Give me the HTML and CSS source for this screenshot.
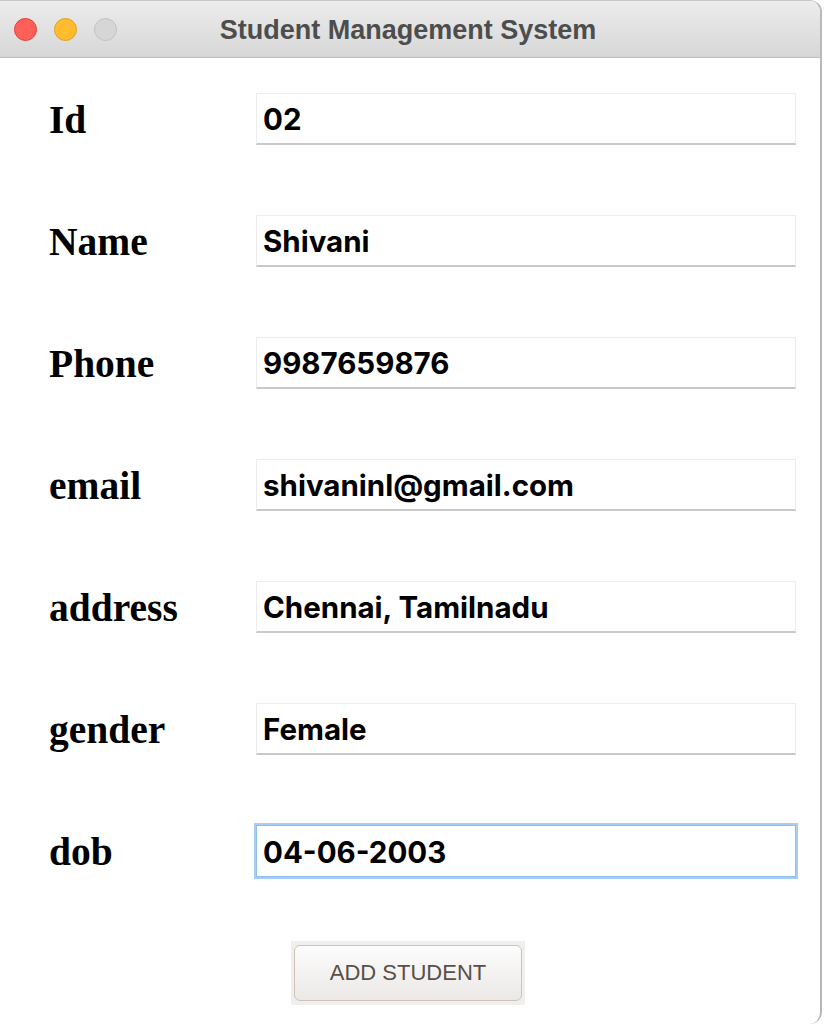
FILE: index.html
```html
<!DOCTYPE html>
<html>
<head>
<meta charset="utf-8">
<link rel="stylesheet" href="styles.css">
</head>
<body>
<div class="window">
  <div class="titlebar">
    <div class="lights">
      <span class="light red"></span>
      <span class="light yellow"></span>
      <span class="light gray"></span>
    </div>
    <div class="title">Student Management System</div>
  </div>
  <div class="content">
    <div class="row"><div class="label">Id</div><div class="field">02</div></div>
    <div class="row"><div class="label">Name</div><div class="field">Shivani</div></div>
    <div class="row"><div class="label">Phone</div><div class="field">9987659876</div></div>
    <div class="row"><div class="label">email</div><div class="field">shivaninl@gmail.com</div></div>
    <div class="row"><div class="label">address</div><div class="field">Chennai, Tamilnadu</div></div>
    <div class="row"><div class="label">gender</div><div class="field">Female</div></div>
    <div class="row"><div class="label">dob</div><div class="field focused">04-06-2003</div></div>
    <div class="actions">
      <div class="btn-wrap"><button class="btn">ADD STUDENT</button></div>
    </div>
  </div>
</div>
</body>
</html>
```
FILE: styles.css
```css
html, body {
  margin: 0;
  padding: 0;
  background: #ffffff;
}
.window {
  width: 822px;
  height: 1024px;
  box-sizing: border-box;
  border-right: 2px solid #b9b9b9;
  border-top: 1px solid #c8c8c8;
  border-radius: 0 12px 12px 0;
  overflow: hidden;
  background: #ffffff;
}
.titlebar {
  position: relative;
  height: 56px;
  background: linear-gradient(#ececec, #d7d7d7);
  border-bottom: 1px solid #bdbdbd;
  display: flex;
  align-items: center;
  justify-content: center;
}
.lights {
  position: absolute;
  left: 14px;
  top: 17px;
  display: flex;
  gap: 17px;
}
.light {
  width: 23px;
  height: 23px;
  border-radius: 50%;
  box-sizing: border-box;
}
.red { background: #fe5f57; border: 1px solid #e0443e; }
.yellow { background: #febc2e; border: 1px solid #dea123; }
.gray { background: #d6d6d6; border: 1px solid #c2c2c2; }
.title {
  font-family: "Liberation Sans", Arial, sans-serif;
  font-weight: bold;
  font-size: 27px;
  color: #4d4d4d;
  margin-left: -4px;
  margin-top: 2px;
}
.content {
  padding: 35px 0 0 0;
  display: flex;
  flex-direction: column;
  gap: 70px;
}
.row {
  display: flex;
  align-items: center;
  height: 52px;
}
.label {
  width: 207px;
  padding-left: 49px;
  box-sizing: content-box;
  font-family: "Liberation Serif", "Times New Roman", serif;
  font-weight: bold;
  font-size: 39.5px;
  color: #000;
  margin-top: 2px;
}
.field {
  width: 540px;
  height: 52px;
  box-sizing: border-box;
  border: 1px solid #ececec;
  border-bottom: 2px solid #c9c9c9;
  background: #fff;
  padding: 0 6px;
  display: flex;
  align-items: center;
  font-family: Inter, "Liberation Sans", Arial, sans-serif;
  font-weight: bold;
  font-size: 29.5px;
  color: #000;
}
.field.focused {
  border: 1px solid #8fbdf0;
  box-shadow: 0 0 0 2px #a7cdf7;
  padding-top: 2px;
}
.actions {
  display: flex;
  justify-content: center;
  margin-top: -6px;
  padding-right: 4px;
}
.btn-wrap {
  background: #f1efed;
  padding: 4px 3px 4px 3px;
}
.btn {
  width: 228px;
  height: 56px;
  border: 1px solid #cbc4bd;
  border-radius: 6px;
  background: linear-gradient(#fdfdfd, #ebe8e5);
  font-family: "Liberation Sans", Arial, sans-serif;
  font-size: 22px;
  color: #5a4f48;
  padding: 0;
}
```
